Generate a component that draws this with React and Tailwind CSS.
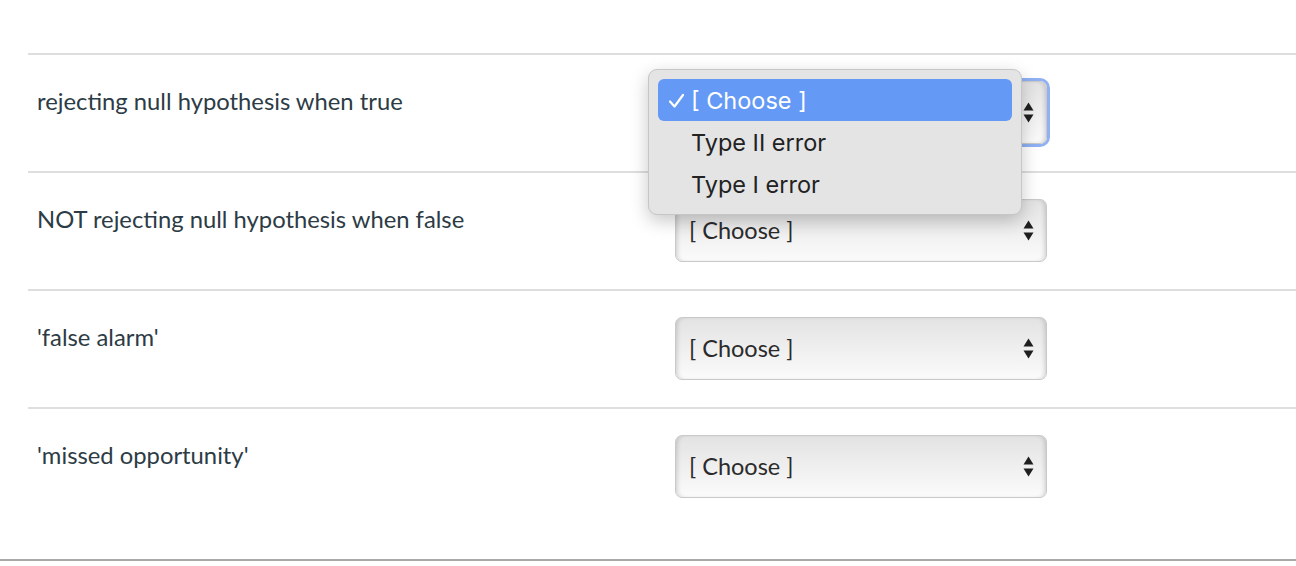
import React from 'react';

const filas = [
    { texto: 'rejecting null hypothesis when true', abierto: true },
    { texto: 'NOT rejecting null hypothesis when false' },
    { texto: "'false alarm'" },
    { texto: "'missed opportunity'" },
];

const opciones = ['[ Choose ]', 'Type II error', 'Type I error'];

function Flechas() {
    return (
        <svg width="11" height="21" viewBox="0 0 11 21" className="shrink-0">
            <path d="M5.5 0.5 L10.5 8.5 L0.5 8.5 Z" fill="#1f1f1f" />
            <path d="M5.5 20.5 L10.5 12.5 L0.5 12.5 Z" fill="#1f1f1f" />
        </svg>
    );
}

function Check() {
    return (
        <svg width="17" height="16" viewBox="0 0 17 16" className="mr-[6px]">
            <path d="M2 8.5 L6.5 13.5 L15 2" fill="none" stroke="white" strokeWidth="2.2" strokeLinecap="round" strokeLinejoin="round" />
        </svg>
    );
}

function Menu() {
    return (
        <div className="absolute left-[-27px] top-[-12px] w-[374px] rounded-[9px] border border-[#c6c6c6] bg-[#e4e4e4] p-[9px] shadow-[0_6px_18px_rgba(0,0,0,0.22)] z-10 font-['Inter',sans-serif] text-[23.5px]">
            {opciones.map((op, idx) => (
                <div
                    key={idx}
                    className={idx === 0
                        ? "flex h-[42px] items-center rounded-[6px] bg-[#6499f6] pl-[10px] pt-[2px] text-white"
                        : "flex h-[42px] items-center pl-[33px] pt-[2px] text-[#222222]"}
                >
                    {idx === 0 && <Check />}
                    <span>{op}</span>
                </div>
            ))}
        </div>
    );
}

function Selector({ abierto }) {
    return (
        <div className="relative mt-[26px] w-[372px]">
            <div
                className={"flex h-[63px] items-center justify-between rounded-[7px] border border-[#c9c9c9] bg-gradient-to-b from-[#e3e3e3] to-[#fbfbfb] pl-[13px] pr-[12px] shadow-[inset_4px_0_5px_-3px_rgba(0,0,0,0.18),inset_-4px_0_5px_-3px_rgba(0,0,0,0.18)] " +
                    (abierto ? "ring-[3px] ring-[#8fb0f3]" : "")}
            >
                <span className="font-['Lato',sans-serif] text-[23.5px] text-[#2b2b2b]">[ Choose ]</span>
                <Flechas />
            </div>
            {abierto && <Menu />}
        </div>
    );
}

export default function App() {
    return (
        <div className="h-[566px] w-[1296px] overflow-hidden bg-white font-['Lato',sans-serif]">
            <div className="pt-[53px] pl-[28px]">
                {filas.map((fila, idx) => (
                    <div key={idx} className="flex h-[118px] border-t-2 border-[#dedede]">
                        <div className="w-[647px] pl-[9px] pt-[29px] text-[23.8px] text-[#2d3b45]">
                            {fila.texto}
                        </div>
                        <Selector abierto={fila.abierto} />
                    </div>
                ))}
            </div>
            <div className="mt-[34px] border-t-2 border-[#a9a9a9]"></div>
        </div>
    );
}
